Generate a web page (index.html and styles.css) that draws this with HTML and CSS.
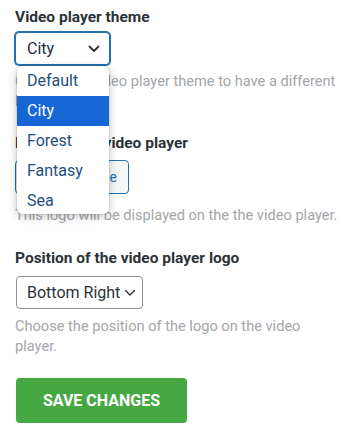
FILE: index.html
```html
<!DOCTYPE html>
<html>
<head>
<meta charset="utf-8">
<link rel="stylesheet" href="styles.css">
</head>
<body>
<div class="page">
  <div class="field f1">
    <div class="label">Video player theme</div>
    <div class="select-wrap">
      <div class="select focused"><span>City</span>
        <svg class="chev" width="12" height="8" viewBox="0 0 12 8"><path d="M1.5 1.5 L6 6 L10.5 1.5" fill="none" stroke="#2c3338" stroke-width="1.8" stroke-linecap="round" stroke-linejoin="round"/></svg>
      </div>
      <ul class="menu">
        <li>Default</li>
        <li class="active">City</li>
        <li>Forest</li>
        <li>Fantasy</li>
        <li>Sea</li>
      </ul>
    </div>
    <div class="desc">Choose the video player theme to have a different look.</div>
  </div>
  <div class="field f2">
    <div class="label">Logo for the video player</div>
    <button class="btn-secondary">Choose Image</button>
    <div class="desc">This logo will be displayed on the the video player.</div>
  </div>
  <div class="field f3">
    <div class="label">Position of the video player logo</div>
    <div class="select plain"><span>Bottom Right</span>
      <svg class="chev" width="12" height="8" viewBox="0 0 12 8"><path d="M1.5 1.5 L6 6 L10.5 1.5" fill="none" stroke="#2c3338" stroke-width="1.4" stroke-linecap="round" stroke-linejoin="round"/></svg>
    </div>
    <div class="desc">Choose the position of the logo on the video player.</div>
  </div>
  <button class="btn-save">SAVE CHANGES</button>
</div>
</body>
</html>
```
FILE: styles.css
```css
* { box-sizing: border-box; }
html, body { margin: 0; padding: 0; background: #fff; }
body { font-family: Roboto, "Noto Sans", Arial, sans-serif; color: #2c3338; }
.page { padding: 7px 0 0 15px; width: 343px; display: flex; flex-direction: column; align-items: flex-start; }
.field { display: flex; flex-direction: column; align-items: flex-start; width: 100%; }
.f1 { margin-bottom: 22px; }
.f2 { margin-bottom: 23px; }
.f3 { margin-bottom: 22px; }
.label { font-size: 15.5px; font-weight: 700; color: #2c3338; line-height: 20px; }
.f1 .label { margin-bottom: 5px; }
.f2 .label { margin-bottom: 7px; }
.f3 .label { margin-bottom: 8px; }
.select-wrap { position: relative; }
.select { display: flex; align-items: center; background: #fff; border-radius: 4px; font-size: 16px; color: #2c3338; }
.select.focused { width: 95px; height: 33px; justify-content: space-between; border: 1px solid #2271b1; box-shadow: 0 0 0 1px #2271b1; padding: 0 9px 0 11px; color: #1d2b3a; }
.select.plain { height: 33px; gap: 4px; margin-left: 1px; padding: 0 6px 0 10px; border: 1px solid #8c8f94; }
.chev { flex: none; }
.menu { position: absolute; left: 2px; top: 34px; width: 92px; height: 148px; margin: 0; padding: 0; list-style: none; background: #fff; border-radius: 6px; box-shadow: 0 2px 10px rgba(0,0,0,0.25), 0 0 0 1px rgba(0,0,0,0.06); overflow: hidden; z-index: 5; }
.menu li { height: 30px; line-height: 30px; padding-left: 10px; font-size: 16px; color: #1e4f7d; }
.menu li.active { background: #1766d6; color: #fff; }
.desc { font-size: 14.6px; color: #a3a6a9; line-height: 20px; width: 326px; }
.f1 .desc { margin-top: 6px; }
.f2 .desc { margin-top: 11px; }
.f3 .desc { margin-top: 7px; }
.btn-secondary { height: 34px; padding: 0 11px; border: 1px solid #2271b1; border-radius: 4px; background: #f6f7f7; color: #2271b1; font-family: inherit; font-size: 14px; }
.btn-save { margin-left: 1px; width: 171px; height: 45px; border: none; border-radius: 4px; background: #46a843; color: #fff; font-family: inherit; font-weight: 700; font-size: 16px; }
```
